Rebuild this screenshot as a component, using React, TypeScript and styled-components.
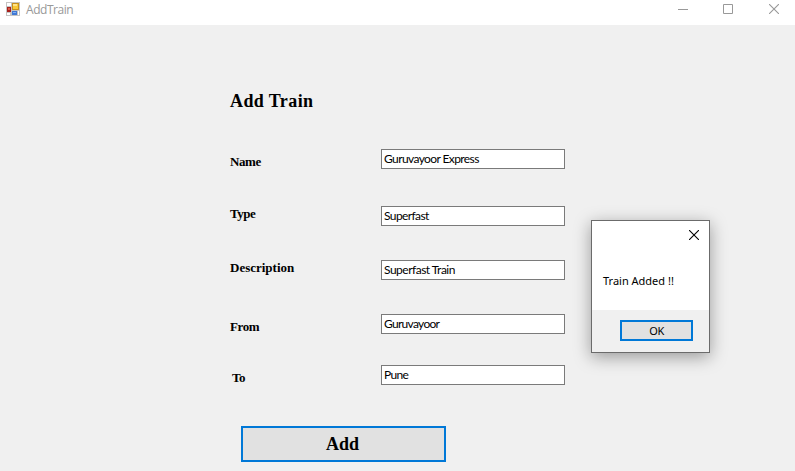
import React from "react";
import styled, { createGlobalStyle } from "styled-components";

const GlobalStyle = createGlobalStyle`
  * { box-sizing: border-box; }
  body { margin: 0; background: #f0f0f0; overflow: hidden; }
`;

const Window = styled.div`
  position: relative;
  width: 795px;
  height: 471px;
  background: #f0f0f0;
  color: #000;
  overflow: hidden;
`;

const TitleBar = styled.header`
  display: flex;
  align-items: flex-start;
  height: 25px;
  padding-left: 6px;
  background: #fff;
`;

const AppIcon = styled.svg`
  width: 14px;
  height: 14px;
  margin-top: 2px;
`;

const WindowTitle = styled.span`
  flex: 1;
  margin: 1px 0 0 6px;
  font: 12px/18px "Open Sans", sans-serif;
  letter-spacing: -0.45px;
  color: #999;
`;

const WindowControls = styled.div`
  display: flex;
  gap: 35px;
  padding: 4px 16px 0 0;
  color: #999;
`;

const Glyph = styled.svg<{ $inset?: number }>`
  display: block;
  width: 10px;
  height: 10px;
  margin-left: ${(p) => p.$inset ?? 0}px;
  fill: none;
  stroke: currentColor;
`;

const Form = styled.form`
  display: flex;
  flex-direction: column;
  align-items: flex-start;
  padding: 66px 0 0 230px;
`;

const Heading = styled.h1`
  margin: 0 0 38px;
  font: bold 18px/20px "Liberation Serif", serif;
  letter-spacing: 0.4px;
`;

const Row = styled.div<{ $gap: number }>`
  display: flex;
  height: 20px;
  margin-bottom: ${(p) => p.$gap}px;
`;

const Label = styled.label<{ $drop: number; $indent?: number; $tracking: number }>`
  width: 151px;
  padding-left: ${(p) => p.$indent ?? 0}px;
  margin-top: ${(p) => p.$drop}px;
  font: bold 13px/16px "Liberation Serif", serif;
  letter-spacing: ${(p) => p.$tracking}px;
`;

const TextBox = styled.input<{ $tracking: number }>`
  width: 184px;
  height: 20px;
  padding: 0 2px 2px;
  border: 1px solid #7a7a7a;
  border-radius: 0;
  outline: 0;
  background: #fff;
  color: #000;
  font: 12px/16px Lato, sans-serif;
  letter-spacing: ${(p) => p.$tracking}px;
`;

const AddButton = styled.button`
  width: 205px;
  height: 36px;
  margin-left: 11px;
  padding: 0 2px 0 0;
  border: 2px solid #0078d7;
  background: #e1e1e1;
  color: #000;
  font: bold 18px/20px "Liberation Serif", serif;
`;

const Dialog = styled.section`
  position: absolute;
  left: 591px;
  top: 220px;
  display: flex;
  flex-direction: column;
  width: 119px;
  height: 133px;
  border: 1px solid #6b6b6b;
  background: #fff;
  box-shadow: 0 4px 16px rgba(0, 0, 0, 0.36);
  font: 11px/16px "Noto Sans", sans-serif;
`;

const DialogBar = styled.div`
  display: flex;
  justify-content: flex-end;
  height: 32px;
  padding: 9px 10px 0 0;
`;

const Message = styled.p`
  flex: 1;
  margin: 0;
  padding: 20px 0 0 11px;
  white-space: nowrap;
`;

const DialogFooter = styled.footer`
  display: flex;
  justify-content: flex-end;
  height: 42px;
  padding: 10px 16px 0 0;
  background: #f0f0f0;
`;

const OkButton = styled.button`
  width: 73px;
  height: 21px;
  padding: 0;
  border: 2px solid #0078d7;
  background: #e1e1e1;
  color: #000;
  font: 11px/17px "Noto Sans", sans-serif;
  letter-spacing: -0.4px;
`;

const fields = [
  { label: "Name", value: "Guruvayoor Express", gap: 37, drop: 5, tracking: -0.6, labelTracking: -0.4 },
  { label: "Type", value: "Superfast", gap: 34, drop: 0, tracking: -0.6, labelTracking: -0.5 },
  { label: "Description", value: "Superfast Train", gap: 34, drop: 0, tracking: -0.5, labelTracking: 0 },
  { label: "From", value: "Guruvayoor", gap: 31, drop: 5, tracking: -0.7, labelTracking: -0.4 },
  { label: "To", value: "Pune", gap: 41, drop: 5, tracking: -0.7, labelTracking: -0.6, indent: 2 },
];

const CloseGlyph = ({ inset = 0 }: { inset?: number }) => (
  <Glyph viewBox="0 0 10 10" $inset={inset}>
    <path d="M0 0 10 10M10 0 0 10" strokeWidth="1.1" />
  </Glyph>
);

export default function App() {
  return (
    <>
      <GlobalStyle />
      <Window>
        <TitleBar>
          <AppIcon viewBox="0 0 14 14">
            <path fill="#c4c4c4" d="M0 0h14v14H0z" />
            <path fill="#fff" d="M1 1h4v3H1zM1 11h3v2H1zM12 9h1v4h-1z" />
            <path fill="#a8201c" d="M1 5h4v5H1z" />
            <path fill="#dc5a48" d="M2 6h2v2H2z" />
            <path fill="#c8901c" d="M6 1h7v7H6z" />
            <path fill="#f8c838" d="M7 2h5v5H7z" />
            <path fill="#ffe288" d="M7 2h4v2H7z" />
            <path fill="#3f78d4" d="M6 9h5v4H6z" />
            <path fill="#80b0f4" d="M7 10h3v1H7z" />
          </AppIcon>
          <WindowTitle>AddTrain</WindowTitle>
          <WindowControls>
            <Glyph viewBox="0 0 10 10"><path d="M0 5.5h10" /></Glyph>
            <Glyph viewBox="0 0 10 10"><path d="M.5 .5h9v9h-9z" /></Glyph>
            <CloseGlyph inset={1} />
          </WindowControls>
        </TitleBar>
        <Form>
          <Heading>Add Train</Heading>
          {fields.map((f) => (
            <Row key={f.label} $gap={f.gap}>
              <Label htmlFor={f.label} $drop={f.drop} $indent={f.indent} $tracking={f.labelTracking}>
                {f.label}
              </Label>
              <TextBox id={f.label} defaultValue={f.value} $tracking={f.tracking} spellCheck={false} />
            </Row>
          ))}
          <AddButton type="button">Add</AddButton>
        </Form>
        <Dialog role="alertdialog">
          <DialogBar><CloseGlyph /></DialogBar>
          <Message>Train Added !!</Message>
          <DialogFooter><OkButton type="button">OK</OkButton></DialogFooter>
        </Dialog>
      </Window>
    </>
  );
}
